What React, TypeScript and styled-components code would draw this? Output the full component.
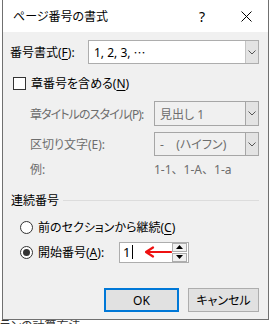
import styled, { createGlobalStyle } from "styled-components";

const GlobalStyle = createGlobalStyle`
    html, body {
        margin: 0;
        padding: 0;
        background: #ffffff;
        overflow: hidden;
    }
    * {
        box-sizing: border-box;
    }
`;

const FONT = `"Noto Sans", "Noto Sans CJK JP", sans-serif`;

const Page = styled.div`
    width: 270px;
    height: 324px;
    overflow: hidden;
    background: #ffffff;
    font-family: ${FONT};
    font-size: 12px;
    font-feature-settings: "palt";
    color: #000000;
`;

const Dialog = styled.div`
    margin-left: 2px;
    width: 267px;
    height: 320px;
    border: 1px solid #707070;
    border-top: none;
    background: #f0f0f0;
    display: flex;
    flex-direction: column;
`;

const TitleBar = styled.div`
    height: 32px;
    background: #ffffff;
    display: flex;
    align-items: center;
    padding-left: 10px;
    font-size: 12px;
`;

const Title = styled.div`
    flex: 1;
    padding-bottom: 1px;
`;

const TitleButton = styled.div`
    width: 44px;
    height: 32px;
    display: flex;
    align-items: center;
    justify-content: center;
    font-size: 14px;
`;

const Body = styled.div`
    flex: 1;
    display: flex;
    flex-direction: column;
    padding: 0 9px 0 7px;
`;

const Row = styled.div<{ $top: number; $height: number; $indent?: number }>`
    display: flex;
    align-items: center;
    margin-top: ${({ $top }) => $top}px;
    height: ${({ $height }) => $height}px;
    padding-left: ${({ $indent }) => $indent ?? 0}px;
`;

const Label = styled.span<{ $width?: number; $disabled?: boolean; $tight?: boolean }>`
    width: ${({ $width }) => ($width ? `${$width}px` : "auto")};
    flex-shrink: 0;
    white-space: nowrap;
    letter-spacing: ${({ $tight }) => ($tight ? "-0.9px" : "0")};
    color: ${({ $disabled }) => ($disabled ? "#6d6d6d" : "#000000")};
`;

const Plain = styled.span`
    font-feature-settings: normal;
    font-family: "Noto Sans CJK JP", sans-serif;
`;

const Key = styled.span`
    text-decoration: underline;
    text-underline-offset: 2px;
`;

const Select = styled.div<{ $disabled?: boolean }>`
    flex: 1;
    height: 100%;
    display: flex;
    border: 1px solid ${({ $disabled }) => ($disabled ? "#a6a6a6" : "#adadad")};
    background: ${({ $disabled }) => ($disabled ? "#f0f0f0" : "#ffffff")};
    color: ${({ $disabled }) => ($disabled ? "#6d6d6d" : "#000000")};
`;

const SelectValue = styled.div`
    flex: 1;
    display: flex;
    align-items: center;
    padding-left: 5px;
    white-space: pre;
`;

const SelectArrow = styled.div<{ $disabled?: boolean }>`
    width: 13px;
    display: flex;
    align-items: center;
    justify-content: center;
    background: #e3e3e3;
    border-left: 1px solid ${({ $disabled }) => ($disabled ? "#a6a6a6" : "#c4c4c4")};
    color: #555555;
`;

const Check = styled.span`
    width: 13px;
    height: 13px;
    border: 1px solid #333333;
    background: #ffffff;
    margin: 0 5px 0 3px;
    flex-shrink: 0;
`;

const Radio = styled.span<{ $checked?: boolean }>`
    width: 13px;
    height: 13px;
    border-radius: 50%;
    border: 1px solid #333333;
    background: #ffffff;
    margin-right: 5px;
    display: flex;
    align-items: center;
    justify-content: center;
    flex-shrink: 0;

    &::after {
        content: "";
        width: 7px;
        height: 7px;
        border-radius: 50%;
        background: ${({ $checked }) => ($checked ? "#333333" : "transparent")};
    }
`;

const GroupHeader = styled.div`
    display: flex;
    align-items: center;
    margin-top: 15px;
    height: 16px;
    padding-left: 1px;
    gap: 4px;

    &::after {
        content: "";
        flex: 1;
        height: 1px;
        background: #dcdcdc;
    }
`;

const SpinBox = styled.div`
    margin-left: auto;
    margin-right: 70px;
    width: 70px;
    height: 21px;
    border: 1px solid #adadad;
    background: #ffffff;
    display: flex;
    align-items: center;
`;

const SpinText = styled.div`
    flex: 1;
    display: flex;
    align-items: center;
    padding-left: 3px;
    gap: 2px;
    height: 100%;
    font-size: 13px;
`;

const Caret = styled.span`
    width: 1px;
    height: 14px;
    background: #000000;
    margin-right: 10px;
`;

const SpinButtons = styled.div`
    width: 15px;
    height: 19px;
    margin-right: 1px;
    display: flex;
    flex-direction: column;
    gap: 1px;
`;

const SpinButton = styled.div`
    flex: 1;
    border: 1px solid #adadad;
    background: #f0f0f0;
    display: flex;
    align-items: center;
    justify-content: center;
`;

const ButtonRow = styled.div`
    display: flex;
    justify-content: flex-end;
    gap: 9px;
    margin-top: 25px;
`;

const Button = styled.div<{ $default?: boolean }>`
    width: ${({ $default }) => ($default ? 75 : 71)}px;
    height: 24px;
    display: flex;
    align-items: center;
    justify-content: center;
    background: #e1e1e1;
    border: ${({ $default }) => ($default ? "2px solid #0078d7" : "1px solid #adadad")};
`;

const Behind = styled.div`
    height: 4px;
    overflow: hidden;
    font-size: 12px;
    line-height: 12px;
    color: #333333;
    white-space: nowrap;
`;

function Chevron() {
    return (
        <svg width="8" height="5" viewBox="0 0 8 5">
            <path d="M0.5 0.5 L4 4 L7.5 0.5" fill="none" stroke="currentColor" strokeWidth="1" />
        </svg>
    );
}

function Triangle({ up }: { up?: boolean }) {
    return (
        <svg width="7" height="4" viewBox="0 0 7 4">
            <path d={up ? "M0 4 L3.5 0 L7 4 Z" : "M0 0 L7 0 L3.5 4 Z"} fill="#000000" />
        </svg>
    );
}

export default function App() {
    return (
        <>
            <GlobalStyle />
            <Page>
                <Dialog>
                    <TitleBar>
                        <Title>ページ番号の書式</Title>
                        <TitleButton>?</TitleButton>
                        <TitleButton>
                            <svg width="11" height="11" viewBox="0 0 11 11">
                                <path d="M0.5 0.5 L10.5 10.5 M10.5 0.5 L0.5 10.5" stroke="#000000" strokeWidth="1" />
                            </svg>
                        </TitleButton>
                    </TitleBar>
                    <Body>
                        <Row $top={8} $height={24}>
                            <Label $width={78}>番号書式(<Key>F</Key>):</Label>
                            <Select>
                                <SelectValue>1, 2, 3, <Plain>…</Plain></SelectValue>
                                <SelectArrow>
                                    <Chevron />
                                </SelectArrow>
                            </Select>
                        </Row>
                        <Row $top={10} $height={18}>
                            <Check />
                            <Label>章番号を含める(<Key>N</Key>)</Label>
                        </Row>
                        <Row $top={9} $height={25} $indent={20}>
                            <Label $width={124} $disabled $tight>章タイトルのスタイル(P):</Label>
                            <Select $disabled>
                                <SelectValue>見出し 1</SelectValue>
                                <SelectArrow $disabled>
                                    <Chevron />
                                </SelectArrow>
                            </Select>
                        </Row>
                        <Row $top={6} $height={24} $indent={20}>
                            <Label $width={124} $disabled>区切り文字(E):</Label>
                            <Select $disabled>
                                <SelectValue>-    (ハイフン)</SelectValue>
                                <SelectArrow $disabled>
                                    <Chevron />
                                </SelectArrow>
                            </Select>
                        </Row>
                        <Row $top={5} $height={16} $indent={20}>
                            <Label $width={124} $disabled>例:</Label>
                            <Label $disabled>
                                1-1<Plain>、</Plain>1-A<Plain>、</Plain>1-a
                            </Label>
                        </Row>
                        <GroupHeader>連続番号</GroupHeader>
                        <Row $top={11} $height={16} $indent={10}>
                            <Radio />
                            <Label>前のセクションから継続(<Key>C</Key>)</Label>
                        </Row>
                        <Row $top={6} $height={22} $indent={10}>
                            <Radio $checked />
                            <Label>開始番号(<Key>A</Key>):</Label>
                            <SpinBox>
                                <SpinText>
                                    1
                                    <Caret />
                                    <svg width="27" height="12" viewBox="0 0 27 12">
                                        <path d="M1 6 L8 1.5 M1 6 L8 10.5 M1.5 6 L26 6" stroke="#ee1111" strokeWidth="2.2" fill="none" strokeLinecap="round" />
                                    </svg>
                                </SpinText>
                                <SpinButtons>
                                    <SpinButton>
                                        <Triangle up />
                                    </SpinButton>
                                    <SpinButton>
                                        <Triangle />
                                    </SpinButton>
                                </SpinButtons>
                            </SpinBox>
                        </Row>
                        <ButtonRow>
                            <Button $default>OK</Button>
                            <Button>キャンセル</Button>
                        </ButtonRow>
                    </Body>
                </Dialog>
                <Behind>ランの計算方法</Behind>
            </Page>
        </>
    );
}
